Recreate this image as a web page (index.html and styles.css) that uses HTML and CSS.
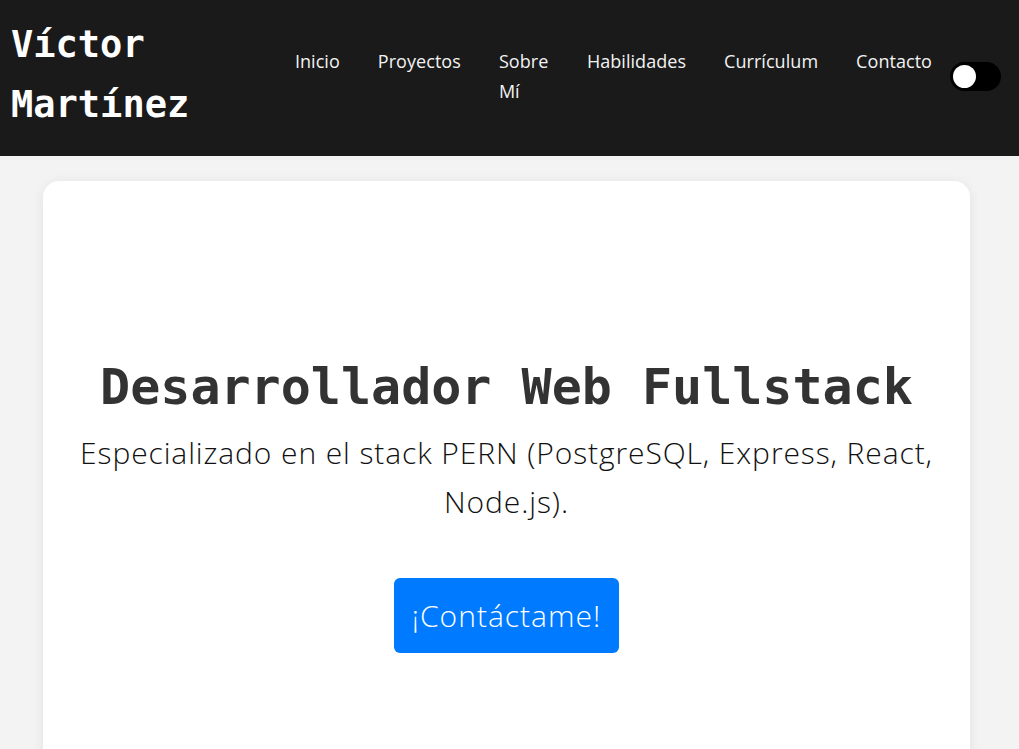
FILE: index.html
```html
<!DOCTYPE html>
<html lang="es">
<head>
<meta charset="utf-8">
<title>Víctor Martínez</title>
<link rel="stylesheet" href="styles.css">
</head>
<body>
<header class="site-header">
  <div class="logo">Víctor<br>Martínez</div>
  <nav class="nav">
    <a class="nav-link" href="#">Inicio</a>
    <a class="nav-link" href="#">Proyectos</a>
    <a class="nav-link nav-link--wrap" href="#">Sobre Mí</a>
    <a class="nav-link" href="#">Habilidades</a>
    <a class="nav-link" href="#">Currículum</a>
    <a class="nav-link" href="#">Contacto</a>
    <span class="toggle"><span class="toggle-knob"></span></span>
  </nav>
</header>
<main class="main">
  <section class="hero-card">
    <h1 class="hero-title">Desarrollador Web Fullstack</h1>
    <p class="hero-sub">Especializado en el stack PERN (PostgreSQL, Express, React, Node.js).</p>
    <a class="hero-btn" href="#">¡Contáctame!</a>
  </section>
</main>
</body>
</html>
```
FILE: styles.css
```css
* { box-sizing: border-box; }
html, body { margin: 0; padding: 0; }
body {
  background: #f3f3f3;
  font-family: "Open Sans", "Lato", sans-serif;
  overflow: hidden;
  height: 749px;
}
.site-header {
  background: #1a1a1a;
  height: 156px;
  display: flex;
  align-items: flex-start;
  justify-content: space-between;
  padding: 15px 18px 0 11px;
}
.logo {
  font-family: "DejaVu Sans Mono", monospace;
  font-weight: bold;
  font-size: 37px;
  line-height: 60px;
  color: #fff;
}
.nav {
  display: flex;
  align-items: flex-start;
  gap: 38px;
  padding-top: 31px;
}
.nav-link {
  font-family: "Open Sans", sans-serif;
  font-weight: 400;
  font-size: 18px;
  letter-spacing: 0.05px;
  line-height: 30px;
  color: #f2f2f2;
  text-decoration: none;
}
.nav-link--wrap { width: 50px; }
.toggle {
  width: 51px;
  height: 29px;
  border-radius: 15px;
  background: #000;
  margin-left: -20px;
  margin-top: 16px;
  display: flex;
  align-items: center;
  padding-left: 3px;
}
.toggle-knob {
  width: 23px;
  height: 23px;
  border-radius: 50%;
  background: #fff;
}
.main {
  padding: 25px 49px 0 43px;
}
.hero-card {
  background: #fff;
  border-radius: 16px;
  box-shadow: 0 2px 12px rgba(0,0,0,0.08);
  min-height: 600px;
  padding: 176px 30px 0;
  text-align: center;
}
.hero-title {
  font-family: "DejaVu Sans Mono", monospace;
  font-weight: bold;
  font-size: 50px;
  line-height: 60px;
  color: #333;
  margin: 0;
}
.hero-sub {
  font-family: "Open Sans", sans-serif;
  font-weight: 300;
  font-size: 30px;
  letter-spacing: 0.9px;
  line-height: 49px;
  color: #111;
  margin: 11px 0 0;
}
.hero-btn {
  display: inline-block;
  margin-top: 52px;
  background: #007bff;
  color: #fff;
  font-family: "Open Sans", sans-serif;
  font-weight: 300;
  font-size: 30px;
  letter-spacing: 1px;
  line-height: 75px;
  height: 75px;
  padding: 0 18px;
  border-radius: 6px;
  text-decoration: none;
}
```
